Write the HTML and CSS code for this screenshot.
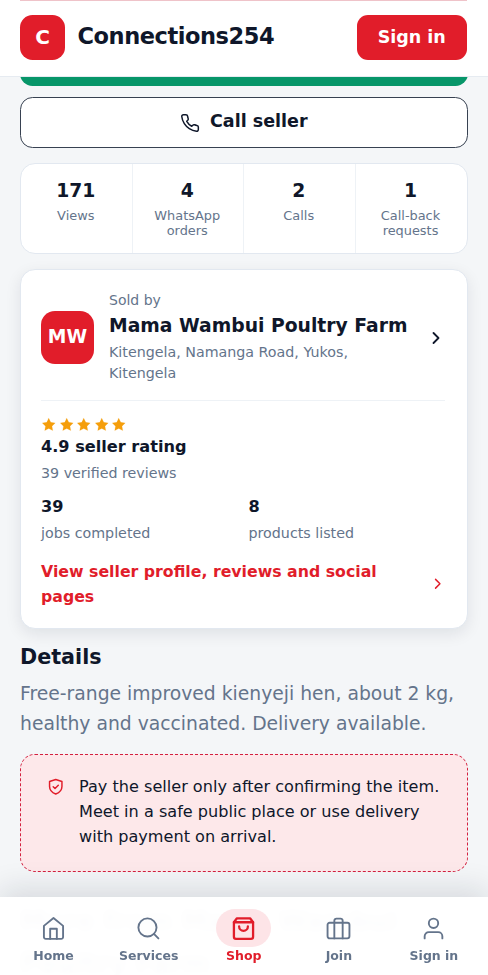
FILE: index.html
```html
<!DOCTYPE html>
<html lang="en">
<head>
<meta charset="utf-8">
<meta name="viewport" content="width=device-width, initial-scale=1">
<title>Connections254</title>
<link rel="stylesheet" href="styles.css">
</head>
<body>
<header class="topbar">
  <div class="brand"><span class="logo">C</span><span class="brand-name">Connections254</span></div>
  <a class="signin">Sign in</a>
</header>
<main class="page">
  <div class="whatsapp"></div>
  <a class="call">
    <svg class="ic-call" viewBox="0 0 24 24"><path d="M22 16.92v3a2 2 0 0 1-2.18 2 19.79 19.79 0 0 1-8.63-3.07 19.5 19.5 0 0 1-6-6 19.79 19.79 0 0 1-3.07-8.67A2 2 0 0 1 4.11 2h3a2 2 0 0 1 2 1.72c.13.96.36 1.9.7 2.81a2 2 0 0 1-.45 2.11L8.09 9.91a16 16 0 0 0 6 6l1.27-1.27a2 2 0 0 1 2.11-.45c.91.34 1.85.57 2.81.7A2 2 0 0 1 22 16.92z"/></svg>
    <span>Call seller</span>
  </a>
  <section class="stats">
    <div class="stat"><b>171</b><span>Views</span></div>
    <div class="stat"><b>4</b><span>WhatsApp orders</span></div>
    <div class="stat"><b>2</b><span>Calls</span></div>
    <div class="stat"><b>1</b><span>Call-back requests</span></div>
  </section>
  <section class="seller">
    <div class="seller-head">
      <span class="avatar">MW</span>
      <div class="who">
        <span class="muted">Sold by</span>
        <strong>Mama Wambui Poultry Farm</strong>
        <span class="muted">Kitengela, Namanga Road, Yukos, Kitengela</span>
      </div>
      <svg class="chev" viewBox="0 0 24 24"><path d="m9 18 6-6-6-6"/></svg>
    </div>
    <div class="rating">
      <div class="stars">
        <svg viewBox="0 0 24 24"><path d="M12 2l3.1 6.3 6.9 1-5 4.9 1.2 6.8-6.2-3.2L5.800 21 7 14.200 2 9.300l6.900-1z"/></svg>
        <svg viewBox="0 0 24 24"><path d="M12 2l3.1 6.3 6.9 1-5 4.9 1.2 6.8-6.2-3.2L5.800 21 7 14.200 2 9.300l6.900-1z"/></svg>
        <svg viewBox="0 0 24 24"><path d="M12 2l3.1 6.3 6.9 1-5 4.9 1.2 6.8-6.2-3.2L5.800 21 7 14.200 2 9.300l6.900-1z"/></svg>
        <svg viewBox="0 0 24 24"><path d="M12 2l3.1 6.3 6.9 1-5 4.9 1.2 6.8-6.2-3.2L5.800 21 7 14.200 2 9.300l6.900-1z"/></svg>
        <svg viewBox="0 0 24 24"><path d="M12 2l3.1 6.3 6.9 1-5 4.9 1.2 6.8-6.2-3.2L5.800 21 7 14.200 2 9.300l6.900-1z"/></svg>
      </div>
      <b>4.9 seller rating</b>
      <span class="muted">39 verified reviews</span>
    </div>
    <div class="counts">
      <div><b>39</b><span class="muted">jobs completed</span></div>
      <div><b>8</b><span class="muted">products listed</span></div>
    </div>
    <a class="profile"><span>View seller profile, reviews and social pages</span><svg class="chev-sm" viewBox="0 0 24 24"><path d="m9 18 6-6-6-6"/></svg></a>
  </section>
  <h2 class="details">Details</h2>
  <p class="desc">Free-range improved kienyeji hen, about 2 kg, healthy and vaccinated. Delivery available.</p>
  <aside class="safety">
    <svg viewBox="0 0 24 24"><path d="M12 2 20.500 4.800v6.700c0 4.700-3.300 8.300-8.500 10.500-5.200-2.200-8.500-5.800-8.500-10.500V4.800z"/><path d="m8.500 12 2.500 2.500 4.500-4.500"/></svg>
    <p>Pay the seller only after confirming the item. Meet in a safe public place or use delivery with payment on arrival.</p>
  </aside>
  <h2 class="more">More from Mama Wambui Poultry Farm</h2>
</main>
<nav class="tabs">
  <a><i><svg viewBox="0 0 24 24"><path d="M2.800 9.500 12 2l9.200 7.500V20.200a1.800 1.800 0 0 1-1.800 1.800H4.600a1.800 1.800 0 0 1-1.800-1.800z"/><path d="M8.800 22v-9.800h6.400V22"/></svg></i><span>Home</span></a>
  <a><i><svg viewBox="0 0 24 24"><circle cx="11" cy="11" r="8.700"/><path d="m21.500 21.500-4.300-4.300"/></svg></i><span>Services</span></a>
  <a class="on"><i><svg viewBox="0 0 24 24"><path d="M5.700 2.200 2.800 6V20a2 2 0 0 0 2 2h14.400a2 2 0 0 0 2-2V6l-2.900-3.800z"/><path d="M2.800 6h18.400"/><path d="M16.200 10a4.200 4.200 0 0 1-8.400 0"/></svg></i><span>Shop</span></a>
  <a><i><svg viewBox="0 0 24 24"><rect x="1.500" y="6.500" width="21" height="15" rx="2"/><path d="M16 21.500V4.500a2 2 0 0 0-2-2h-4a2 2 0 0 0-2 2v17"/></svg></i><span>Join</span></a>
  <a><i><svg viewBox="0 0 24 24"><circle cx="12" cy="7" r="4.500"/><path d="M3.500 21.500V19.500a4 4 0 0 1 4-4h9a4 4 0 0 1 4 4v2"/></svg></i><span>Sign in</span></a>
</nav>
</body>
</html>
```
FILE: styles.css
```css
* { box-sizing: border-box; }
html, body { margin: 0; height: 975px; overflow: hidden; }
body {
  background: #f4f6f8;
  color: #0f172a;
  font-family: "DejaVu Sans", sans-serif;
  font-size: 16.15px;
  line-height: 25px;
}
svg { display: block; flex: none; fill: none; stroke: currentColor; stroke-width: 2; stroke-linecap: round; stroke-linejoin: round; }

.topbar {
  position: fixed; top: 0; left: 0; right: 0; z-index: 2;
  height: 77px;
  padding: 0 21px 1px 20px;
  display: flex; align-items: center; justify-content: space-between;
  background: #fff;
  border-bottom: 1.500px solid #e6ebf1;
}
.topbar::before { content: ""; position: absolute; top: 0; left: 20px; right: 21px; height: 1px; background: #efc3c9; }
.brand { display: flex; align-items: center; gap: 12.5px; }
.logo {
  width: 45px; height: 45px; border-radius: 12.5px;
  background: #e11d2a; color: #fff;
  display: grid; place-items: center;
  font-size: 20px; font-weight: 700;
}
.brand-name { font-size: 22.5px; font-weight: 700; letter-spacing: -0.02em; margin-top: -2px; }
.signin {
  height: 45px; width: 110.5px; border-radius: 11px;
  background: #e11d2a; color: #fff;
  display: grid; place-items: center;
  font-size: 17.5px; font-weight: 700;
}

.page { padding: 36px 20.500px 0 20px; }
.whatsapp { height: 50px; border-radius: 12.5px; background: #079669; }
.call {
  margin-top: 10.500px; height: 51px;
  border: 1.25px solid #374151; border-radius: 12.5px;
  background: #fff;
  display: flex; align-items: center; justify-content: center; gap: 10px;
  padding: 0 0 1px 0;
  font-size: 17.5px; font-weight: 700;
}
.ic-call { width: 20px; height: 20px; stroke-width: 1.800; margin-top: 2px; }

.stats {
  margin-top: 15px; height: 91px;
  display: grid; grid-template-columns: 110.500px 111.500px 111.500px 1fr;
  background: #fff; border: 1px solid #e2e8f0; border-radius: 15px;
}
.stat { display: flex; flex-direction: column; align-items: center; padding: 14px 14px 0 13px; text-align: center; }
.stat + .stat { border-left: 1px solid #eef2f6; }
.stat b { font-size: 18.75px; line-height: 25px; }
.stat span { margin-top: 5px; font-size: 12.900px; line-height: 15px; color: #64748b; }

.seller {
  margin-top: 15px; height: 360px;
  padding: 19px 20.500px 0 20px;
  background: #fff; border: 1px solid #e2e8f0; border-radius: 15px;
  box-shadow: 0 5px 16px rgba(15, 23, 42, .09);
}
.muted { font-size: 14.250px; line-height: 21px; color: #64748b; }
.seller-head { display: flex; align-items: center; gap: 15px; height: 112px; padding-bottom: 15px; border-bottom: 1px solid #eef2f6; margin-right: 1px; }
.avatar { flex: none; width: 53px; height: 53px; border-radius: 14px; margin-top: 2px; background: #e11d2a; color: #fff; display: grid; place-items: center; padding-bottom: 2px; font-size: 18.75px; font-weight: 700; }
.who { flex: 1; display: flex; flex-direction: column; }
.who strong { font-size: 18.75px; line-height: 30px; white-space: nowrap; }
.who .muted:first-child { font-size: 14px; }
.who .muted:last-child { max-width: 270px; margin-top: 1px; }
.chev { width: 20px; height: 20px; stroke-width: 2.200; margin-left: -15px; margin-right: -1px; margin-top: 2px; }
.rating { display: flex; flex-direction: column; padding-top: 16px; }
.stars { display: flex; gap: 2px; height: 17px; color: #f59e0b; }
.stars svg { width: 15.5px; height: 15.5px; fill: currentColor; stroke-width: .300; }
.rating .muted, .counts .muted { line-height: 28px; }
.counts { display: grid; grid-template-columns: 1fr 1fr; gap: 10px; margin-top: 7px; }
.counts div { display: flex; flex-direction: column; }
.profile { margin-top: 12px; display: flex; align-items: center; gap: 12px; color: #e11d2a; font-weight: 700; font-size: 15.750px; }
.profile span { flex: 1; }
.chev-sm { width: 17.5px; height: 17.5px; }

.details { margin: 15px 0 0; font-size: 20.7px; line-height: 27px; }
.desc { margin: 8px -5px 0 0; font-size: 18.75px; line-height: 30px; color: #64748b; }
.safety {
  margin-top: 15.500px; height: 117.500px; padding: 19px 20px 0 25.500px;
  display: flex; gap: 15px;
  background: #fde8ea; border: 1.25px dashed #d3203f; border-radius: 15px;
  font-size: 16.100px;
}
.safety svg { width: 17.500px; height: 17.500px; margin-top: 4px; color: #e11d2a; }
.safety p { margin: 0 -5px 0 0; }
.more { margin: 28px 0 0; font-size: 26px; line-height: 42px; }

.tabs {
  position: fixed; left: 0; right: 0; bottom: 0; z-index: 2;
  height: 78px; padding: 12px 6.500px 0 6px;
  display: grid; grid-template-columns: repeat(5, 1fr);
  background: rgba(255, 255, 255, .99);
  backdrop-filter: blur(4px);
  box-shadow: 0 -8px 30px rgba(15, 23, 42, .12);
}
.tabs a { display: flex; flex-direction: column; align-items: center; color: #64748b; font-size: 12.5px; font-weight: 700; line-height: 16px; }
.tabs i { width: 55px; height: 38px; border-radius: 19px; display: grid; place-items: center; }
.tabs svg { width: 25px; height: 25px; stroke-width: 1.800; }
.tabs span { margin-top: 1px; }
.tabs .on { color: #e11d2a; }
.tabs .on i { background: #fde4e7; }
.tabs .on svg { stroke-width: 2.200; }
```
